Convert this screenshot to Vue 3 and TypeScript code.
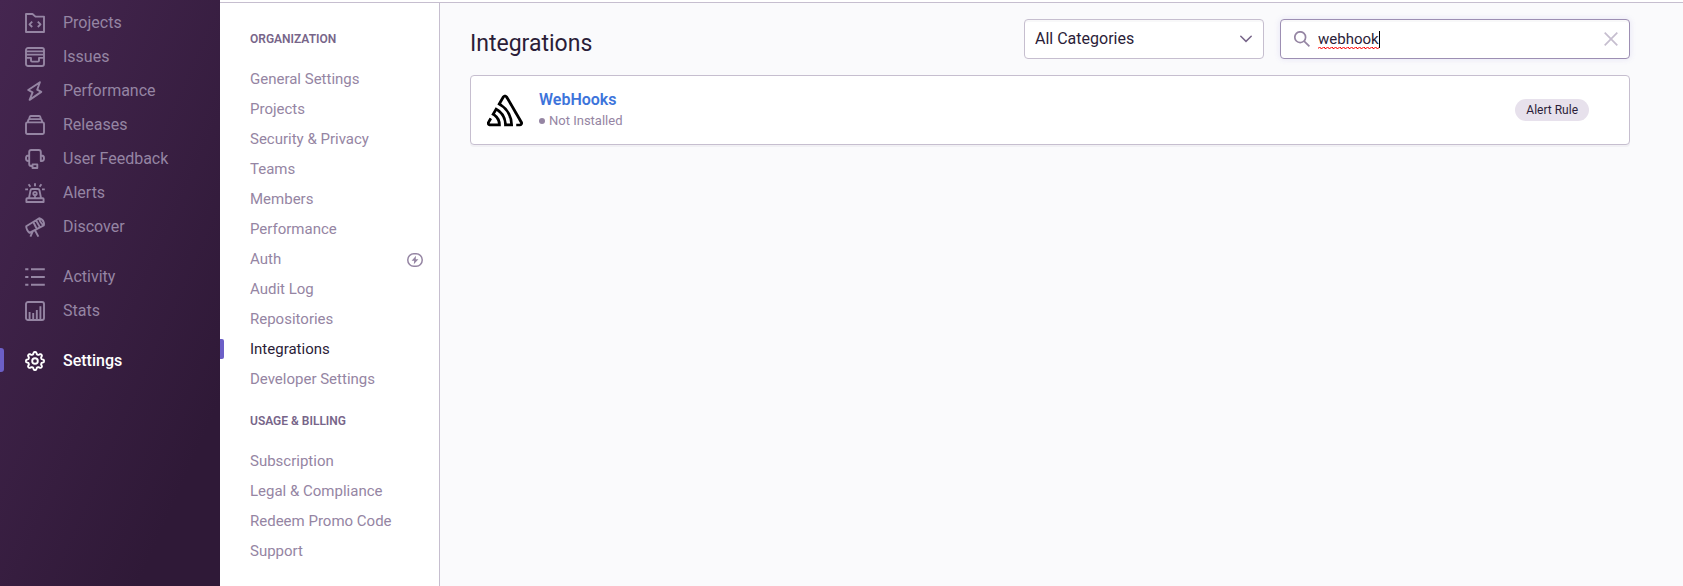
<script setup lang="ts">
import { ref } from 'vue'

interface NavItem {
  label: string
  icon: string
  active?: boolean
}

interface SettingsItem {
  label: string
  active?: boolean
  badge?: boolean
}

interface SettingsSection {
  title: string
  items: SettingsItem[]
}

const gearPath = (): string => {
  const points: string[] = []
  for (let i = 0; i < 144; i++) {
    const angle = (i / 144) * Math.PI * 2
    const radius = 7.9 + 1.15 * Math.tanh(1.8 * Math.cos(8 * angle))
    const x = 10 + radius * Math.sin(angle)
    const y = 10 - radius * Math.cos(angle)
    points.push(`${x.toFixed(2)} ${y.toFixed(2)}`)
  }
  return `M${points.join('L')}ZM12.8 10a2.8 2.8 0 1 1-5.6 0a2.8 2.8 0 0 1 5.6 0Z`
}

const icons: Record<string, string> = {
  projects: 'M1 1H7.5L10.5 3.6H19V19H1ZM7.2 8.6L4.5 11.3L7.2 14M12.8 8.6L15.5 11.3L12.8 14',
  issues:
    'M3 1H17A2 2 0 0 1 19 3V17A2 2 0 0 1 17 19H3A2 2 0 0 1 1 17V3A2 2 0 0 1 3 1ZM1 4.4H19M1 7.6H19M1 10.9H6V13.6Q6 14.6 7 14.6H13Q14 14.6 14 13.6V10.9H19',
  performance: 'M14.9 1.2L3.2 9L7.6 11.3L4.6 18.9L16.3 10.9L12.2 8.7Z',
  releases:
    'M2.4 7.4H17.6Q19 7.4 19 8.8V17.6Q19 19 17.6 19H2.4Q1 19 1 17.6V8.8Q1 7.4 2.4 7.4ZM2.6 7.2L3.4 4.9Q3.7 4.1 4.5 4.1H15.5Q16.3 4.1 16.6 4.9L17.4 7.2M4.2 4L4.7 1.9Q4.9 1 5.8 1H14.2Q15.1 1 15.3 1.9L15.8 4',
  feedback:
    'M4.2 6.5V3Q4.2 1 6.2 1H13.8Q15.8 1 15.8 3V11.5M4.2 6.5H3.4Q1 6.5 1 9.2Q1 12 3.4 12H4.2ZM15.8 6.5H16.6Q19 6.5 19 9.2Q19 12 16.6 12H15.8ZM4.2 12V15Q4.2 17 6.2 17H7.5M7.5 15.4H12.3V19H7.5Z',
  alerts:
    'M2.2 15.2H17.8Q18.6 15.2 18.6 16V19H1.4V16Q1.4 15.2 2.2 15.2ZM4 15L5.5 7.4Q5.8 6 7.2 6H12.8Q14.2 6 14.5 7.4L16 15M10 0.2V3.2M3.6 1.2L5.4 3.8M16.4 1.2L14.6 3.8M0.2 6.4H3M17 6.4H19.8M11.7 10.6a1.7 1.7 0 1 1-3.4 0a1.7 1.7 0 0 1 3.4 0ZM10 12.4V15',
  discover:
    'M1.2 9.3L11 3.3L15 10.3L4.4 15.8Q3.2 14.8 2.2 13Q1.2 11.3 1.2 9.3ZM8.3 5L11.8 12M11 3.3L14.2 1.2Q17.8 2 18.8 5.4Q19.2 7 18.8 8.4L15 10.3M14.2 1.2Q14.4 5 18.8 8.4M8 13.8L5.4 19.6M9.8 13L13.4 19.6',
  activity: 'M0.2 2.2H3.4M6 2.2H19.8M0.2 10H3.4M6 10H19.8M0.2 17.8H3.4M6 17.8H19.8',
  stats:
    'M3 1H17A2 2 0 0 1 19 3V17A2 2 0 0 1 17 19H3A2 2 0 0 1 1 17V3A2 2 0 0 1 3 1ZM4.6 11V18.5M8.2 12V18.5M11.8 9V18.5M15.4 5.3V18.5',
  settings: gearPath(),
}

const navGroups: NavItem[][] = [
  [
    { label: 'Projects', icon: 'projects' },
    { label: 'Issues', icon: 'issues' },
    { label: 'Performance', icon: 'performance' },
    { label: 'Releases', icon: 'releases' },
    { label: 'User Feedback', icon: 'feedback' },
    { label: 'Alerts', icon: 'alerts' },
    { label: 'Discover', icon: 'discover' },
  ],
  [
    { label: 'Activity', icon: 'activity' },
    { label: 'Stats', icon: 'stats' },
  ],
  [{ label: 'Settings', icon: 'settings', active: true }],
]

const sections: SettingsSection[] = [
  {
    title: 'Organization',
    items: [
      { label: 'General Settings' },
      { label: 'Projects' },
      { label: 'Security & Privacy' },
      { label: 'Teams' },
      { label: 'Members' },
      { label: 'Performance' },
      { label: 'Auth', badge: true },
      { label: 'Audit Log' },
      { label: 'Repositories' },
      { label: 'Integrations', active: true },
      { label: 'Developer Settings' },
    ],
  },
  {
    title: 'Usage & Billing',
    items: [
      { label: 'Subscription' },
      { label: 'Legal & Compliance' },
      { label: 'Redeem Promo Code' },
      { label: 'Support' },
    ],
  },
]

const category = ref('all')
const query = ref('webhook')
</script>

<template>
  <div class="app">
    <nav class="sidebar" aria-label="Primary">
      <ul v-for="(group, index) in navGroups" :key="index" class="nav-group">
        <li v-for="item in group" :key="item.label">
          <a href="#" class="nav-link" :class="{ active: item.active }">
            <svg class="nav-icon" viewBox="0 0 20 20" aria-hidden="true">
              <path :d="icons[item.icon]" />
            </svg>
            <span>{{ item.label }}</span>
          </a>
        </li>
      </ul>
    </nav>

    <div class="page">
      <div class="topbar"></div>
      <div class="body">
        <nav class="settings-nav" aria-label="Settings">
          <section v-for="section in sections" :key="section.title" class="settings-section">
            <h2 class="section-title">{{ section.title }}</h2>
            <ul>
              <li v-for="item in section.items" :key="item.label">
                <a href="#" class="settings-link" :class="{ active: item.active }">
                  <span>{{ item.label }}</span>
                  <svg v-if="item.badge" class="power-icon" viewBox="0 0 16 14" aria-hidden="true">
                    <rect x="0.8" y="0.8" width="14.4" height="12.4" rx="6" />
                    <path d="M9 2.8L4.6 7.7H7.2L6.8 11.2L11.4 6.3H8.7Z" />
                  </svg>
                </a>
              </li>
            </ul>
          </section>
        </nav>

        <main class="content">
          <header class="content-header">
            <h1>Integrations</h1>
            <div class="filters">
              <div class="select-box">
                <select v-model="category" aria-label="Category">
                  <option value="all">All Categories</option>
                </select>
                <svg class="chevron" viewBox="0 0 12 8" aria-hidden="true">
                  <path d="M0.8 1.2L6 6.4L11.2 1.2" />
                </svg>
              </div>
              <div class="search-box">
                <label class="search-field">
                  <svg class="search-icon" viewBox="0 0 16 16" aria-hidden="true">
                    <circle cx="6.2" cy="6.2" r="5.4" />
                    <path d="M10.1 10.1L15.4 15.4" />
                  </svg>
                  <input v-model="query" type="text" aria-label="Filter integrations" />
                  <span class="caret"></span>
                </label>
                <button type="button" class="clear" aria-label="Clear search" @click="query = ''">
                  <svg viewBox="0 0 14 14" aria-hidden="true">
                    <path d="M0.7 0.7L13.3 13.3M13.3 0.7L0.7 13.3" />
                  </svg>
                </button>
              </div>
            </div>
          </header>

          <article class="card">
            <svg class="logo" viewBox="0 1 24 22" aria-hidden="true">
              <path
                d="M13.91 2.505c-.873-1.448-2.972-1.448-3.844 0L6.904 7.92a15.478 15.478 0 0 1 8.53 12.811h-2.221A13.301 13.301 0 0 0 5.784 9.814l-2.926 5.06a7.65 7.65 0 0 1 4.435 5.848H2.194a.365.365 0 0 1-.298-.534l1.413-2.402a5.16 5.16 0 0 0-1.614-.913L.296 19.275a2.182 2.182 0 0 0 .812 2.999 2.24 2.24 0 0 0 1.086.288h6.983a9.322 9.322 0 0 0-3.845-8.318l1.11-1.922a11.47 11.47 0 0 1 4.95 10.24h5.915a17.242 17.242 0 0 0-7.885-15.28l2.244-3.845a.37.37 0 0 1 .504-.13c.255.14 9.75 16.708 9.928 16.9a.365.365 0 0 1-.327.543h-2.287c.029.612.029 1.223 0 1.831h2.297a2.206 2.206 0 0 0 1.922-3.31z"
              />
            </svg>
            <div class="details">
              <a href="#" class="name">WebHooks</a>
              <span class="status">Not Installed</span>
            </div>
            <span class="tag">Alert Rule</span>
          </article>
        </main>
      </div>
    </div>
  </div>
</template>

<style>
body {
  margin: 0;
  background: #fafafc;
}
</style>

<style scoped>
.app {
  display: flex;
  min-height: 100vh;
  font-family: Roboto, "Liberation Sans", sans-serif;
  color: #2b1d38;
}

ul {
  list-style: none;
  margin: 0;
  padding: 0;
}

a {
  text-decoration: none;
}

svg {
  display: block;
  flex: none;
  fill: none;
  stroke: currentColor;
}

.sidebar {
  flex: none;
  box-sizing: border-box;
  width: 220px;
  padding-top: 6px;
  background: linear-gradient(294deg, #2f1937 17%, #452650 100%);
}

.nav-group {
  margin-bottom: 16px;
}

.nav-link {
  position: relative;
  display: flex;
  align-items: center;
  gap: 18px;
  height: 34px;
  padding-left: 25px;
  color: #9585a3;
  font-size: 16px;
}

.nav-link span {
  padding-bottom: 2px;
}

.nav-link.active {
  color: #fff;
}

.nav-link.active span {
  font-weight: 500;
}

.nav-link.active::before {
  content: "";
  position: absolute;
  left: 0;
  top: 4px;
  width: 4px;
  height: 24px;
  border-radius: 0 3px 3px 0;
  background: #6c5fc7;
}

.nav-icon {
  width: 20px;
  height: 20px;
  stroke-width: 1.9;
  stroke-linejoin: round;
}

.page {
  flex: 1;
  min-width: 0;
  display: flex;
  flex-direction: column;
}

.topbar {
  height: 2px;
  background: #fff;
  border-bottom: 1px solid #c6becf;
}

.body {
  flex: 1;
  display: flex;
  max-width: 1440px;
}

.settings-nav {
  flex: none;
  box-sizing: border-box;
  width: 220px;
  padding-top: 26px;
  background: #fff;
  border-right: 1px solid #c6becf;
}

.settings-section {
  margin-bottom: 17px;
}

.section-title {
  margin: 0 0 15px;
  padding-left: 30px;
  font-size: 12px;
  line-height: 20px;
  font-weight: 600;
  text-transform: uppercase;
  color: #776589;
}

.settings-link {
  position: relative;
  display: flex;
  align-items: center;
  justify-content: space-between;
  height: 30px;
  padding: 0 16px 0 30px;
  font-size: 15px;
  color: #9585a3;
}

.settings-link.active {
  color: #2b1d38;
}

.settings-link.active::before {
  content: "";
  position: absolute;
  left: 0;
  top: 5px;
  width: 4px;
  height: 20px;
  border-radius: 0 2px 2px 0;
  background: #6c5fc7;
}

.power-icon {
  width: 16px;
  height: 14px;
  padding-top: 2px;
  stroke-width: 1.5;
}

.power-icon path {
  fill: currentColor;
  stroke: none;
}

.content {
  flex: 1;
  min-width: 0;
  padding: 16px 30px;
}

.content-header {
  display: flex;
  align-items: center;
  justify-content: space-between;
  margin-bottom: 16px;
}

h1 {
  margin: 0;
  padding-top: 10px;
  font-size: 23px;
  line-height: 30px;
  font-weight: 400;
}

.filters {
  display: flex;
  gap: 16px;
}

.select-box {
  position: relative;
  width: 240px;
}

select {
  appearance: none;
  display: block;
  box-sizing: border-box;
  width: 100%;
  height: 40px;
  padding: 0 36px 2px 10px;
  border: 1px solid #c6becf;
  border-radius: 4px;
  background: #fff;
  box-shadow: inset 0 2px 1px rgba(43, 29, 56, 0.03);
  color: inherit;
  font-family: inherit;
  font-size: 16px;
}

.chevron {
  position: absolute;
  right: 12px;
  top: 16px;
  width: 12px;
  height: 8px;
  stroke-width: 1.5;
  stroke-linecap: round;
  color: #776589;
  pointer-events: none;
}

.search-box {
  box-sizing: border-box;
  display: flex;
  align-items: center;
  width: 350px;
  height: 40px;
  padding: 0 11px 0 13px;
  border: 1px solid #9d8fb3;
  border-radius: 4px;
  background: #fff;
  box-shadow: inset 0 2px 1px rgba(43, 29, 56, 0.03), 0 0 6px rgba(108, 95, 199, 0.14);
}

.search-field {
  flex: 1;
  display: flex;
  align-items: center;
  cursor: text;
}

.search-icon {
  width: 16px;
  height: 16px;
  margin-right: 8px;
  stroke-width: 1.7;
  color: #9585a3;
}

input {
  field-sizing: content;
  height: 20px;
  padding: 0;
  border: 0;
  outline: 0;
  background:
    linear-gradient(45deg, transparent 65%, #f00 80%, transparent 90%),
    linear-gradient(135deg, transparent 5%, #f00 15%, transparent 25%),
    linear-gradient(135deg, transparent 45%, #f00 55%, transparent 65%),
    linear-gradient(45deg, transparent 25%, #f00 35%, transparent 50%);
  background-size: 8px 2px;
  background-position: left bottom;
  background-repeat: repeat-x;
  color: inherit;
  caret-color: transparent;
  font-family: inherit;
  font-size: 15px;
}

.caret {
  width: 1px;
  height: 17px;
  background: #000;
}

.clear {
  padding: 0;
  border: 0;
  background: none;
  color: #c6becf;
}

.clear svg {
  width: 14px;
  height: 14px;
  stroke-width: 1.7;
}

.card {
  box-sizing: border-box;
  display: flex;
  align-items: center;
  min-height: 70px;
  padding: 0 40px 0 16px;
  border: 1px solid #c6becf;
  border-radius: 4px;
  background: #fff;
  box-shadow: 0 2px 0 rgba(37, 11, 54, 0.04);
}

.logo {
  width: 36px;
  height: 33px;
  fill: #000;
  stroke: none;
}

.details {
  flex: 1;
  display: flex;
  flex-direction: column;
  align-items: flex-start;
  padding-left: 16px;
}

.name {
  font-size: 16px;
  line-height: 22px;
  font-weight: 600;
  color: #3d74db;
}

.status {
  display: flex;
  align-items: center;
  gap: 4px;
  font-size: 13px;
  line-height: 20px;
  color: #9585a3;
}

.status::before {
  content: "";
  width: 6px;
  height: 6px;
  border-radius: 50%;
  background: #9585a3;
}

.tag {
  padding: 0 11px;
  border-radius: 11px;
  background: #e7e1ec;
  font-size: 12px;
  line-height: 22px;
}
</style>
